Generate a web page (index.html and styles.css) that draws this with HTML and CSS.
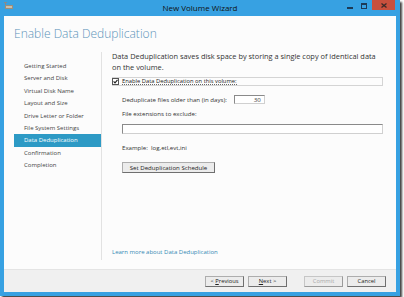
FILE: index.html
```html
<html>
	<head>
		<title>New Volume Wizard</title>
		<link rel="stylesheet" href="styles.css">
	</head>
	<body>
	<div class="window">
		<div class="titlebar">
			<svg class="appicon" width="9" height="8" viewBox="0 0 9 8">
				<rect x="0" y="0" width="3" height="1" fill="#8a8a8a"/>
				<rect x="1" y="1" width="1" height="2" fill="#8a8a8a"/>
				<rect x="1" y="3" width="8" height="4" fill="#9c8f7a"/>
				<rect x="2" y="4" width="6" height="2" fill="#c9bfae"/>
			</svg>
			<span class="title">New Volume Wizard</span>
			<div class="controls">
				<span class="ctl min"></span>
				<span class="ctl max"></span>
				<span class="ctl close">
					<svg width="6" height="5" viewBox="0 0 6 5"><path d="M0.5 0.5 L5.5 4.5 M5.5 0.5 L0.5 4.5" stroke="#3a2a28" stroke-width="1.3"/></svg>
				</span>
			</div>
		</div>
		<div class="client">
			<h1>Enable Data Deduplication</h1>
			<div class="main">
				<ul class="steps">
					<li>Getting Started</li>
					<li>Server and Disk</li>
					<li>Virtual Disk Name</li>
					<li>Layout and Size</li>
					<li>Drive Letter or Folder</li>
					<li>File System Settings</li>
					<li class="current">Data Deduplication</li>
					<li>Confirmation</li>
					<li>Completion</li>
				</ul>
				<div class="page">
					<p class="intro">Data Deduplication saves disk space by storing a single copy of identical data on the volume.</p>
					<div class="enable-row">
						<span class="check">
							<svg width="5" height="5" viewBox="0 0 5 5"><path d="M0.6 2.4 L2 3.9 L4.5 0.8" stroke="#222" stroke-width="1.1" fill="none"/></svg>
						</span>
						<span class="focus">Enable Data Deduplication on this volume:</span>
					</div>
					<div class="options">
						<div class="days-row">
							<span>Deduplicate files older than (in days):</span>
							<span class="field days">30</span>
						</div>
						<div class="label">File extensions to exclude:</div>
						<div class="field wide"></div>
						<div class="example">Example:&nbsp; log,etl,evt,ini</div>
						<button class="btn schedule">Set Deduplication Schedule</button>
					</div>
					<a class="learn" href="#">Learn more about Data Deduplication</a>
				</div>
			</div>
			<div class="footer">
				<button class="btn">&lt; <u>P</u>revious</button>
				<button class="btn"><u>N</u>ext &gt;</button>
				<button class="btn disabled commit">Commit</button>
				<button class="btn">Cancel</button>
			</div>
		</div>
	</div>
	</body>
</html>
```
FILE: styles.css
```css
body {
	background-color: #fff;
	font-family: "Open Sans", "Noto Sans", sans-serif;
	margin: 0;
}
.window {
	background-color: #37a1e2;
	box-shadow: 2px 2px 2px rgba(0, 0, 0, 0.75);
	display: flex;
	flex-direction: column;
	height: 292px;
	padding: 0 4px 4px 4px;
	width: 392px;
}
.titlebar {
	align-items: center;
	display: flex;
	height: 16px;
	position: relative;
}
.appicon {
	margin-top: -4px;
}
.title {
	color: #111;
	font-size: 8px;
	left: 0;
	position: absolute;
	right: 0;
	text-align: center;
	top: 2px;
}
.controls {
	align-items: flex-start;
	align-self: flex-start;
	display: flex;
	margin-left: auto;
	margin-right: 1px;
}
.ctl {
	display: block;
	height: 10px;
}
.min {
	border-bottom: 2px solid #1d3a56;
	box-sizing: border-box;
	height: 9px;
	margin-right: 8px;
	width: 6px;
}
.max {
	border: 1px solid #1d3a56;
	border-top-width: 2px;
	box-sizing: border-box;
	height: 6px;
	margin: 3px 5px 0 0;
	width: 6px;
}
.close {
	align-items: center;
	background-color: #c8503d;
	display: flex;
	justify-content: center;
	width: 23px;
}
.client {
	background-color: #fcfcfc;
	display: flex;
	flex: 1;
	flex-direction: column;
}
h1 {
	box-sizing: border-box;
	color: #5b93b9;
	font-size: 12px;
	font-weight: 300;
	height: 32px;
	line-height: 16px;
	margin: 0;
	padding: 10px 0 0 10px;
}
.main {
	display: flex;
	flex: 1;
}
.steps {
	border-right: 1px solid #e2e2e2;
	color: #444;
	font-size: 6px;
	list-style: none;
	margin: 4px 0 9px 0;
	padding: 8px 0 0 10px;
	width: 89px;
}
.steps li {
	height: 12.4px;
	line-height: 12.4px;
	padding-left: 10px;
}
.steps li.current {
	background-color: #2d9ac5;
	color: #fff;
}
.page {
	display: flex;
	flex: 1;
	flex-direction: column;
	padding: 3px 13px 0 10px;
}
.intro {
	color: #333;
	font-size: 7.4px;
	line-height: 11px;
	margin: 0 0 4px 0;
}
.enable-row {
	align-items: center;
	border: 1px solid #d4d4d4;
	display: flex;
	font-size: 5.8px;
	height: 7px;
}
.check {
	align-items: center;
	background-color: #fff;
	border: 1px solid #555;
	display: flex;
	height: 5px;
	justify-content: center;
	margin: 0 3px 0 -1px;
	width: 5px;
}
.focus {
	border-bottom: 1px dotted #666;
	color: #222;
	line-height: 6px;
}
.options {
	color: #333;
	display: flex;
	flex-direction: column;
	font-size: 6.1px;
	padding: 9px 0 0 10px;
}
.days-row {
	align-items: center;
	display: flex;
}
.field {
	background-color: #fff;
	border: 1px solid #8a8a8a;
	border-right-color: #d0d0d0;
	border-bottom-color: #d0d0d0;
	box-sizing: border-box;
}
.days {
	height: 9px;
	line-height: 7px;
	margin-left: 7px;
	padding-right: 3px;
	text-align: right;
	width: 31px;
}
.label {
	margin-top: 5px;
}
.wide {
	height: 10px;
	margin-top: 6px;
	width: 261px;
}
.example {
	margin-top: 9px;
}
.btn {
	background-color: #ececec;
	border: 1px solid #adadad;
	border-right-color: #6f6f6f;
	border-bottom-color: #6f6f6f;
	color: #222;
	font-family: "Open Sans", "Noto Sans", sans-serif;
	font-size: 5.8px;
	height: 11px;
	line-height: 8px;
	padding: 0;
	width: 39px;
}
.schedule {
	font-size: 6.1px;
	margin-top: 10px;
	width: 93px;
}
.learn {
	color: #3489b4;
	font-size: 6px;
	margin-top: auto;
	padding-bottom: 13px;
	text-decoration: none;
}
.footer {
	align-items: center;
	background-color: #f0f0f0;
	border-top: 1px solid #e4e4e4;
	display: flex;
	gap: 4px;
	height: 22px;
	justify-content: flex-end;
	padding-right: 10px;
}
.commit {
	margin-left: 13px;
}
.disabled {
	border-color: #c6c6c6;
	border-bottom-color: #9a9a9a;
	border-right-color: #9a9a9a;
	color: #a8a8a8;
}
```
